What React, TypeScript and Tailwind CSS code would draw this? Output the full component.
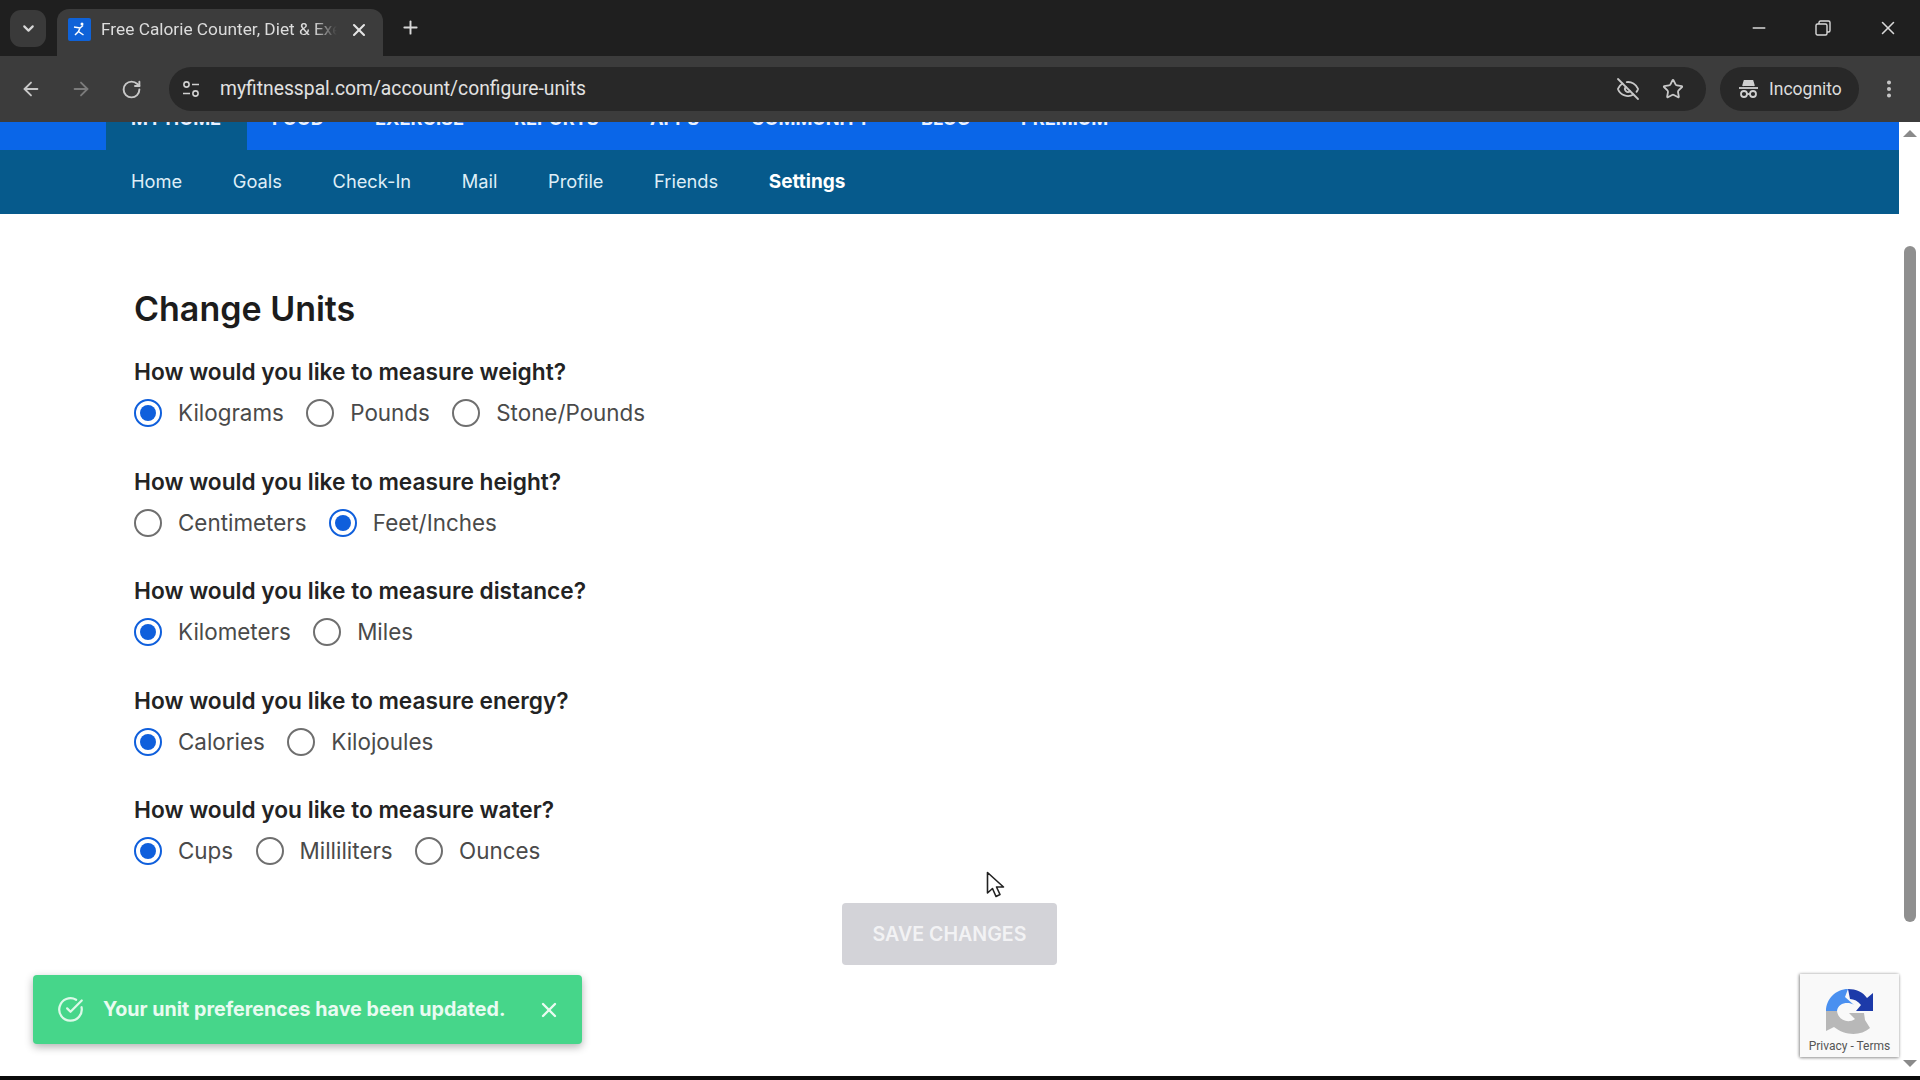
import { ArrowLeft, ArrowRight, ChevronDown, CircleCheckBig, EllipsisVertical, EyeOff, Minus, Plus, RotateCw, Star, X } from "lucide-react";

const groups = [
  { q: "How would you like to measure weight?", opts: ["Kilograms", "Pounds", "Stone/Pounds"], sel: 0 },
  { q: "How would you like to measure height?", opts: ["Centimeters", "Feet/Inches"], sel: 1 },
  { q: "How would you like to measure distance?", opts: ["Kilometers", "Miles"], sel: 0 },
  { q: "How would you like to measure energy?", opts: ["Calories", "Kilojoules"], sel: 0 },
  { q: "How would you like to measure water?", opts: ["Cups", "Milliliters", "Ounces"], sel: 0 },
];

const topNav = [
  { t: "MY HOME", w: "w-[141px] ml-[106px] bg-[#065a8c] pl-[25px]" },
  { t: "FOOD", w: "w-[128px] pl-[25px]" },
  { t: "EXERCISE", w: "w-[139px]" },
  { t: "REPORTS", w: "w-[136px]" },
  { t: "APPS", w: "w-[101px]" },
  { t: "COMMUNITY", w: "w-[170px]" },
  { t: "BLOG", w: "w-[100px]" },
  { t: "PREMIUM", w: "w-[110px]" },
];

const subNav = ["Home", "Goals", "Check-In", "Mail", "Profile", "Friends", "Settings"];

function Radio({ on }: { on: boolean }) {
  return (
    <span className={`flex h-[28px] w-[28px] items-center justify-center rounded-full border-[2.5px] ${on ? "border-[#0f5fdc]" : "border-[#6f6f6f]"}`}>
      {on && <span className="h-[16px] w-[16px] rounded-full bg-[#0f5fdc]" />}
    </span>
  );
}

export default function App() {
  return (
    <div className="relative flex h-[1080px] w-[1920px] flex-col overflow-hidden bg-white font-['Inter',sans-serif]">
      {/* tab strip */}
      <div className="flex h-[56px] shrink-0 items-end bg-[#1f1f1f] pl-[10px] text-[#d8d8d8]">
        <div className="mb-[9px] flex h-[37px] w-[36px] items-center justify-center rounded-[11px] bg-[#3a3a3a]">
          <ChevronDown size={17} strokeWidth={3} />
        </div>
        <div className="ml-[11px] flex h-[47px] w-[326px] items-center rounded-t-[12px] bg-[#3c3c3c] pb-[6px] pl-[11px] pr-[14px]">
          <svg width="23" height="23" viewBox="0 0 23 23" className="shrink-0">
            <rect width="23" height="23" rx="2" fill="#0f62d8" />
            <circle cx="14" cy="6" r="1.500" fill="#fff" />
            <path d="M6 9 L12 10 L15 7.500 M12 10 L10.500 13.500 L15.500 17 M10.500 13.500 L7 17" stroke="#fff" strokeWidth="1.500" fill="none" />
          </svg>
          <span className="ml-[10px] w-[236px] overflow-hidden whitespace-nowrap font-['Roboto',sans-serif] text-[17.3px] text-[#dcdcdc] [mask-image:linear-gradient(to_right,#000_90%,transparent)]">
            Free Calorie Counter, Diet &amp; Exercise
          </span>
          <X size={20} strokeWidth={2.5} className="ml-auto text-[#e4e4e4]" />
        </div>
        <Plus size={21} strokeWidth={2.2} className="mb-[18px] ml-[17px]" />
        <div className="mb-[17px] ml-auto flex items-center pr-[21px]">
          <Minus size={20} strokeWidth={1.6} />
          <svg width="16" height="16" viewBox="0 0 16 16" fill="none" stroke="currentColor" strokeWidth="1.4" className="ml-[46px]">
            <rect x="1" y="4" width="11" height="11" rx="1.5" />
            <path d="M4 4V2.5A1.5 1.5 0 0 1 5.5 1H13.5A1.5 1.5 0 0 1 15 2.5V10.500A1.500 1.500 0 0 1 13.500 12H12" />
          </svg>
          <X size={22} strokeWidth={1.7} className="ml-[46px]" />
        </div>
      </div>

      {/* toolbar */}
      <div className="flex h-[66px] shrink-0 items-center bg-[#3c3c3c] text-[#c8c8c8]">
        <ArrowLeft size={22} strokeWidth={2} className="ml-[20px]" />
        <ArrowRight size={22} strokeWidth={2} className="ml-[28px] text-[#7b7b7b]" />
        <RotateCw size={21} strokeWidth={2.2} className="ml-[29px]" />
        <div className="ml-[27px] flex h-[44px] w-[1537px] items-center rounded-full bg-[#282828] pl-[12px] pr-[22px]">
          <svg width="20" height="20" viewBox="0 0 20 20" fill="none" stroke="#d0d0d0" strokeWidth="1.6">
            <circle cx="5.5" cy="5.500" r="2.600" />
            <path d="M11 5.500H18M2 14.500H9" />
            <circle cx="14.500" cy="14.500" r="2.600" />
          </svg>
          <span className="ml-[19px] font-['Roboto',sans-serif] text-[19.3px] text-[#e2e2e2]">myfitnesspal.com/account/configure-units</span>
          <EyeOff size={24} strokeWidth={1.8} className="ml-auto" />
          <Star size={22} strokeWidth={2} className="ml-[22px]" />
        </div>
        <div className="ml-[14px] flex h-[44px] w-[139px] items-center rounded-full bg-[#282828] pl-[18px]">
          <svg width="21" height="20" viewBox="0 0 21 20" fill="none" stroke="#d0d0d0" strokeWidth="1.800">
            <path d="M5 7 L6.500 2H14.500L16 7" fill="#d0d0d0" />
            <path d="M1 9H20" />
            <circle cx="6" cy="15" r="3" />
            <circle cx="15" cy="15" r="3" />
            <path d="M9 15H12" />
          </svg>
          <span className="ml-[10px] font-['Roboto',sans-serif] text-[17.5px] text-[#dcdcdc]">Incognito</span>
        </div>
        <EllipsisVertical size={22} strokeWidth={2.4} className="ml-[19px]" />
      </div>

      {/* page */}
      <div className="flex min-h-0 flex-1">
        <div className="flex min-w-0 flex-1 flex-col">
          <nav className="flex h-[28px] shrink-0 items-end overflow-hidden bg-[#0a66e8]">
            {topNav.map((n) => (
              <div key={n.t} className={`flex h-[28px] shrink-0 items-start ${n.w}`}>
                <span className="-mt-[14px] text-[18.2px] font-bold leading-[20px] text-[#e8f0ff]">{n.t}</span>
              </div>
            ))}
          </nav>
          <nav className="flex h-[64px] shrink-0 items-center gap-[50.6px] bg-[#065a8c] pl-[131px] text-[18.3px] text-[#dfeef7]">
            {subNav.map((s) => (
              <span key={s} className={s === "Settings" ? "text-[19px] font-bold text-white" : ""}>{s}</span>
            ))}
          </nav>

          <main className="flex flex-col pl-[134px] pt-[75px]">
            <h1 className="mb-[30px] text-[34px] font-semibold leading-[40px] text-[#1c1c1c]">Change Units</h1>
            <div className="flex flex-col gap-[41.6px]">
              {groups.map((g) => (
                <section key={g.q}>
                  <h2 className="mb-[14px] text-[22.7px] font-semibold leading-[26px] text-[#232323]">{g.q}</h2>
                  <div className="flex items-center gap-[22.400px]">
                    {g.opts.map((o, i) => (
                      <label key={o} className="flex items-center gap-[16px] text-[22.4px] leading-[28px] text-[#4a4a4a]">
                        <Radio on={i === g.sel} />
                        {o}
                      </label>
                    ))}
                  </div>
                </section>
              ))}
            </div>
            <div className="ml-[-134px] mt-[38px] flex justify-center">
              <button className="flex h-[62px] w-[215px] items-center justify-center rounded-[4px] bg-[#d3d3d8] text-[19.6px] font-semibold text-[#f2f2f4]">
                SAVE CHANGES
              </button>
            </div>
          </main>
        </div>

        {/* scrollbar */}
        <div className="flex w-[21px] shrink-0 flex-col items-center bg-white pt-[8px]">
          <div className="h-0 w-0 border-x-[7px] border-b-[7px] border-x-transparent border-b-[#8a8a8a]" />
          <div className="mt-[109px] h-[676px] w-[12px] rounded-full bg-[#8f8f8f]" />
          <div className="mt-[138px] h-0 w-0 border-x-[7px] border-t-[7px] border-x-transparent border-t-[#8a8a8a]" />
        </div>
      </div>

      {/* bottom edge */}
      <div className="h-[4px] shrink-0 bg-[#0a0a0a]" />

      {/* toast */}
      <div className="absolute left-[33px] top-[975px] flex h-[69px] w-[549px] items-center rounded-[4px] bg-[#46d68a] pl-[24px] text-white shadow-[0_3px_8px_rgba(0,0,0,0.3)]">
        <CircleCheckBig size={27} strokeWidth={2} className="text-[#dcf9e8]" />
        <span className="ml-[19px] text-[19.7px] font-bold text-[#e9fbf1]">Your unit preferences have been updated.</span>
        <X size={24} strokeWidth={2.4} className="absolute right-[21px] text-[#e9fbf1]" />
      </div>

      {/* recaptcha */}
      <div className="absolute left-[1800px] top-[974px] flex h-[83px] w-[99px] flex-col items-center bg-[#f9f9f9] pt-[12px] shadow-[-1px_0_3px_rgba(0,0,0,0.3),0_1px_3px_rgba(0,0,0,0.3)]">
        <svg width="54" height="50" viewBox="0 0 54 50">
          <path d="M3 25C3 13 13 3 25 3L22 11L31 19C25 15 15 17 14 25Z" fill="#4a90f0" />
          <path d="M25 3C33 3 40 6 44 12L50 7V25H33L38 19C35 15 31 13 27 13Z" fill="#1c3aa9" />
          <path d="M3 25H14C15 34 25 38 32 33L26 27L41 27L42 34L47 42C38 50 22 50 11 41L3 45Z" fill="#b8b8b8" />
        </svg>
        <span className="mt-[3px] whitespace-nowrap font-['Roboto',sans-serif] text-[12px] leading-[14px] text-[#555]">Privacy - Terms</span>
      </div>

      {/* cursor */}
      <svg width="20" height="28" viewBox="0 0 20 28" className="absolute left-[986px] top-[871px]">
        <path d="M1.500 1.500V22L6.500 17.500L10 25.500L14 23.500L10.500 16H17.500Z" fill="#fff" stroke="#222" strokeWidth="1.600" strokeLinejoin="round" />
      </svg>
    </div>
  );
}
